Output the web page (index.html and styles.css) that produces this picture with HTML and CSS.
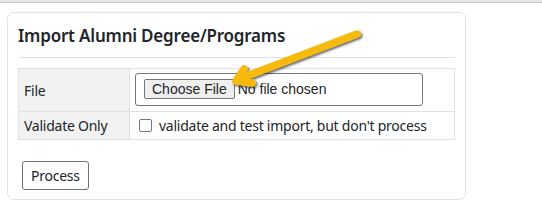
FILE: index.html
```html
<!DOCTYPE html>
<html lang="en">
<head>
    <meta charset="UTF-8">
    <title>Import Alumni Degree/Programs</title>
    <link rel="stylesheet" href="styles.css">
</head>
<body>
    <div class="topbar"></div>

    <div class="card">
        <h2 class="card-title">Import Alumni Degree/Programs</h2>

        <table class="form-table">
            <tr class="row-file">
                <th>File</th>
                <td>
                    <label class="file-input">
                        <span class="file-button">Choose File</span>
                        <span class="file-name">No file chosen</span>
                    </label>
                </td>
            </tr>
            <tr class="row-validate">
                <th>Validate Only</th>
                <td>
                    <label class="check">
                        <span class="check-box"></span>
                        validate and test import, but don't process
                    </label>
                </td>
            </tr>
        </table>

        <div class="actions">
            <button class="btn">Process</button>
        </div>

        <!-- arrow callout drawn over the form -->
        <svg class="callout" width="150" height="80" viewBox="0 0 150 80">
            <defs>
                <filter id="shade" x="-20%" y="-20%" width="140%" height="140%">
                    <feDropShadow dx="1.5" dy="1.5" stdDeviation="1.2" flood-color="#000" flood-opacity="0.65"/>
                </filter>
            </defs>
            <g filter="url(#shade)" stroke="#f6b90c" stroke-width="7.5" stroke-linecap="round" stroke-linejoin="round" fill="none">
                <path d="M131 6 L13 51"/>
                <path d="M18 41 L10 53 L26 55"/>
            </g>
        </svg>
    </div>
</body>
</html>
```

FILE: styles.css
```css
body {
    margin: 0;
    background: #fff;
    font-family: 'Noto Sans', 'Open Sans', sans-serif;
    color: #212529;
}

.topbar {
    height: 2px;
    border-bottom: 1px solid #c9c9c9;
    background: #e6e6e6;
}

.card {
    position: relative;
    width: 437px;
    margin: 9px 0 0 7px;
    padding: 10px 10px 9px 10px;
    border: 1px solid #e0e4e8;
    border-radius: 7px;
}

.card-title {
    margin: 0;
    padding: 0 0 8px 0;
    font-size: 17px;
    font-weight: 600;
    line-height: 26px;
    letter-spacing: -0.2px;
    border-bottom: 1px solid #dee2e6;
}

.form-table {
    width: 100%;
    margin-top: 10px;
    border-collapse: collapse;
    font-size: 14px;
    letter-spacing: -0.25px;
}

.form-table th,
.form-table td {
    border: 1px solid #dee2e6;
    padding: 0 5px;
    text-align: left;
    font-weight: normal;
}

.form-table th {
    width: 100px;
    background: #f2f2f2;
}

.row-file td {
    padding: 3px 5px 5px;
}

.row-file th,
.row-file td {
    height: 34px;
}

.row-validate th,
.row-validate td {
    height: 27px;
}

.file-input {
    display: flex;
    align-items: center;
    width: 288px;
    height: 33px;
    padding: 0 8px;
    box-sizing: border-box;
    border: 1px solid #767676;
    border-radius: 3px;
    font-family: 'Liberation Sans', Arial, sans-serif;
    font-size: 14px;
    letter-spacing: 0;
}

.file-button {
    padding: 1px 7px;
    margin-right: 3px;
    background: #efefef;
    border: 1px solid #767676;
    border-radius: 2px;
}

.check {
    display: flex;
    align-items: center;
    gap: 7px;
    padding-left: 4px;
}

.check-box {
    width: 11px;
    height: 11px;
    border: 1px solid #767676;
    border-radius: 2px;
}

.actions {
    padding: 21px 0 0 4px;
}

.btn {
    padding: 4px 8px;
    font-family: 'Noto Sans', 'Open Sans', sans-serif;
    font-size: 14px;
    letter-spacing: -0.25px;
    color: #212529;
    background: #fff;
    border: 1px solid #6c757d;
    border-radius: 3px;
}

.callout {
    position: absolute;
    left: 218px;
    top: 15px;
}
```
